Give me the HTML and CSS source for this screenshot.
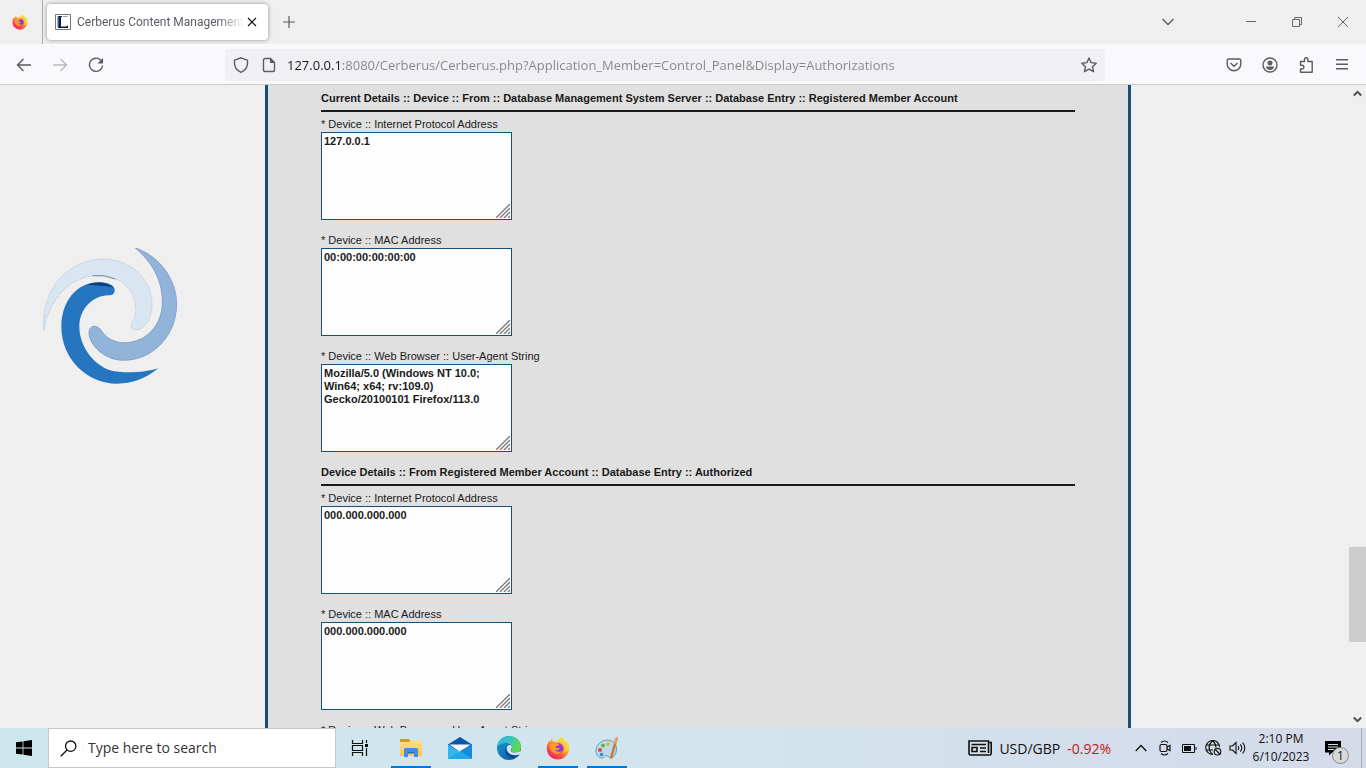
FILE: index.html
```html
<!DOCTYPE html>
<html lang="en">
<head>
<meta charset="utf-8">
<title>Cerberus Content Management</title>
<link rel="stylesheet" href="styles.css">
</head>
<body>
<svg class="defs" aria-hidden="true">
  <defs>
    <linearGradient id="fxBody" x1="0.85" y1="0.1" x2="0.2" y2="0.95">
      <stop offset="0" stop-color="#fff044"/><stop offset="0.35" stop-color="#ffb627"/><stop offset="0.65" stop-color="#ff5a36"/><stop offset="1" stop-color="#f01c72"/>
    </linearGradient>
    <linearGradient id="fxGlobe" x1="0.8" y1="0" x2="0.3" y2="1">
      <stop offset="0" stop-color="#b833e1"/><stop offset="1" stop-color="#5a3fc8"/>
    </linearGradient>
    <linearGradient id="edgeBlue" x1="0" y1="0" x2="1" y2="1">
      <stop offset="0" stop-color="#1b9de2"/><stop offset="1" stop-color="#0c4f96"/>
    </linearGradient>
    <linearGradient id="edgeGreen" x1="0" y1="0" x2="1" y2="0.5">
      <stop offset="0" stop-color="#2bb5e8"/><stop offset="0.5" stop-color="#36c6c0"/><stop offset="1" stop-color="#62d84c"/>
    </linearGradient>
    <linearGradient id="folder" x1="0" y1="0" x2="0" y2="1">
      <stop offset="0" stop-color="#ffe08a"/><stop offset="1" stop-color="#fbc83f"/>
    </linearGradient>
    <symbol id="firefox" viewBox="0 0 24 24">
      <path fill="url(#fxBody)" d="M15.300.500c1 1.200 2 2.400 2.600 4 .8.500 1.400 1.100 1.800 1.700l.5-2c1.900 2 2.900 5.200 2.900 8.300C23.100 18.500 18.200 23.500 12 23.500S.8 18.700.8 12.500c0-3.400 1.200-6 2.700-8l.4 1.800L5.800 2.500c.3 1.200.9 2.300 1.900 3.200 1.500-.6 3.200-.7 4.600-.1.200-2.300 1.200-4.100 3-5.100z"/>
      <circle cx="12.300" cy="12.300" r="5.200" fill="url(#fxGlobe)"/>
      <path fill="#ff9a26" d="M3.600 8.500c2.200-2 4.700-2 6.700-1.200 1.200 0 2.200.4 2.800 1.100-.5 1.300-1.800 1.500-3 1.900-.5.700.1 1.500.9 1.700 1.200.2 2 .4 3.100-.1-.8 2.200-3.200 3-5.200 1.900 1 2 4.800 2.700 7 .9-1.300 3.500-6.500 4.600-9.600 1.400C4.200 14 3.400 11 3.600 8.500z"/>
      <path fill="#ffd43a" d="M15.300.5c-1.200 3.800 5 5.200 4.500 11.500-.1 2-1.100 3.700-2.500 4.800 4.800-1.800 5.500-6.900 3.700-10.200C19.300 4.600 17 3.500 15.300.5z"/>
    </symbol>
  </defs>
</svg>

<header class="tabbar">
  <button class="pinned" aria-label="Firefox View"><svg width="16" height="16"><use href="#firefox"/></svg></button>
  <div class="tab">
    <svg width="16" height="16" viewBox="0 0 16 16"><path fill="#fff" stroke="#777" d="M.5.500h15v15H.5z"/><path fill="#111a38" d="M3 2h4v1H6v9.500h5l2-1V14H3v-1z"/><path fill="#3d5db0" d="M2.500 2H4v11H2.500z"/><path stroke="#99a" d="M8 2.500h4.500"/></svg>
    <span class="tab-title">Cerberus Content Management</span>
    <button class="tab-close" aria-label="Close tab"><svg width="10" height="10" viewBox="0 0 10 10"><path d="M1 1l8 8M9 1L1 9" stroke="#15141a" stroke-width="1.200"/></svg></button>
  </div>
  <button class="new-tab" aria-label="New tab"><svg width="12" height="12" viewBox="0 0 12 12"><path d="M6 0v12M0 6h12" stroke="#5b5b66" stroke-width="1.200"/></svg></button>
  <button class="all-tabs" aria-label="List all tabs"><svg width="14" height="8" viewBox="0 0 14 8" fill="none"><path d="M1.500 1L7 6.500 12.500 1" stroke="#5b5b66" stroke-width="1.500"/></svg></button>
  <div class="window-controls">
    <button aria-label="Minimize"><svg width="10" height="10" viewBox="0 0 10 10"><path d="M0 4.500h10" stroke="#666"/></svg></button>
    <button aria-label="Restore"><svg width="10" height="10" viewBox="0 0 10 10" fill="none" stroke="#666"><path d="M.5 2.500h7v7h-7zM2.500 2.500v-2h7v7h-2"/></svg></button>
    <button aria-label="Close"><svg width="10" height="10" viewBox="0 0 10 10"><path d="M0 0l10 10M10 0L0 10" stroke="#666"/></svg></button>
  </div>
</header>

<nav class="toolbar">
  <button aria-label="Back"><svg width="16" height="16" viewBox="0 0 16 16"><path d="M15 8H2M7.500 2L1.500 8l6 6"/></svg></button>
  <button class="dim" aria-label="Forward"><svg width="16" height="16" viewBox="0 0 16 16"><path d="M1 8h13M8.500 2l6 6-6 6"/></svg></button>
  <button aria-label="Reload"><svg width="16" height="16" viewBox="0 0 16 16"><path d="M12.800 3.200A6.600 6.600 0 1 0 14.600 8.500"/><path d="M15 1v5.500H9.500z" fill="#5b5b66" stroke="none"/></svg></button>
  <div class="urlbar">
    <button aria-label="Tracking protection"><svg width="16" height="16" viewBox="0 0 16 16"><path d="M8 .8l6.500 2.400v3.300c0 4-2.500 7-6.500 8.800C4 13.500 1.500 10.500 1.500 6.500V3.200z"/></svg></button>
    <button aria-label="Site information"><svg width="16" height="16" viewBox="0 0 16 16"><path d="M9.500 1.500H4A1.500 1.500 0 0 0 2.500 3v10A1.500 1.500 0 0 0 4 14.500h8a1.500 1.500 0 0 0 1.500-1.500V5.500z"/><path d="M9 1l5 5H9z" fill="#5b5b66" stroke="none"/></svg></button>
    <input class="url" type="text" aria-label="Address" spellcheck="false" value="127.0.0.1:8080/Cerberus/Cerberus.php?Application_Member=Control_Panel&amp;Display=Authorizations">
    <button aria-label="Bookmark"><svg width="16" height="16" viewBox="0 0 16 16"><path stroke-linejoin="round" d="M8 1l2.100 4.600 5.100.6-3.700 3.500 1 5L8 12.200l-4.500 2.500 1-5L.8 6.200l5.100-.6z"/></svg></button>
  </div>
  <button aria-label="Save to Pocket"><svg width="16" height="16" viewBox="0 0 16 16"><path d="M2.500 2h11a1.300 1.300 0 0 1 1.300 1.300V7a6.800 6.800 0 0 1-13.600 0V3.300A1.300 1.300 0 0 1 2.500 2zM4.500 6L8 9.200 11.500 6"/></svg></button>
  <button aria-label="Account"><svg width="16" height="16" viewBox="0 0 16 16"><circle cx="8" cy="8" r="7"/><circle cx="8" cy="6" r="2.500" fill="#5b5b66" stroke="none"/><path d="M4 9.500h8c0 2.200-1.800 3.500-4 3.500s-4-1.300-4-3.500z" fill="#5b5b66" stroke="none"/></svg></button>
  <button aria-label="Extensions"><svg width="16" height="16" viewBox="0 0 16 16"><path stroke-linejoin="round" d="M2.500 7V4.500h4V2.500a1.700 1.700 0 0 1 3.400 0v2h4.300v10.800H2.500V12H4a1.800 1.800 0 0 0 0-3.800H2.500z"/></svg></button>
  <button aria-label="Menu"><svg width="16" height="16" viewBox="0 0 16 16"><path d="M2 2.700h12M2 7.200h12M2 11.700h12"/></svg></button>
</nav>

<div class="viewport">
  <aside class="side">
    <svg class="logo" viewBox="66 54 408 408" role="img" aria-label="Swirl logo">
      <path fill="#d9e6f1" stroke="#9fb2c5" stroke-width="2" stroke-dasharray="4 4" d="M71 301C62 172 150 87 250 87c85 0 146 63 146 135 0 33-11 58-28 71-10 9-33 9-35-5 0-10 14-23 14-48 0-55-37-103-112-103C150 137 90 205 71 301z"/>
      <path fill="none" stroke="#76879a" stroke-width="3" d="M218 137q36-4 68 10"/>
      <path fill="#93b4da" stroke="#6f8eb8" stroke-width="2" d="M346 54c74 24 124 96 124 168 0 93-70 169-160 169-55 0-103-46-103-83 0-12 8-20 17-19 10 0 16 7 21 14 17 24 40 35 70 35 65-2 112-53 112-123 0-65-32-120-81-161z"/>
      <path fill="#2675c0" d="M415 415c-40 32-80 46-123 46-92 0-168-76-168-171 0-75 46-133 111-133 27 0 49 8 49 23 0 10-6 16-18 16-51 1-88 44-88 94 0 55 37 110 92 131 45 11 105 6 145-6z"/>
      <path fill="#0d3c7d" d="M202 164c25-11 60-8 78 8-20-5-50-6-78-8z"/>
    </svg>
  </aside>

  <main class="panel">
    <section>
      <h2>Current Details :: Device :: From :: Database Management System Server :: Database Entry :: Registered Member Account</h2>
      <div class="field">
        <label for="ip1">* Device :: Internet Protocol Address</label>
        <div class="box"><textarea id="ip1" spellcheck="false">127.0.0.1</textarea><svg class="grip" viewBox="0 0 14 14"><path d="M0 14L14 0M4 14L14 4M8 14l6-6M12 14l2-2"/></svg></div>
      </div>
      <div class="field">
        <label for="mac1">* Device :: MAC Address</label>
        <div class="box"><textarea id="mac1" spellcheck="false">00:00:00:00:00:00</textarea><svg class="grip" viewBox="0 0 14 14"><path d="M0 14L14 0M4 14L14 4M8 14l6-6M12 14l2-2"/></svg></div>
      </div>
      <div class="field">
        <label for="ua1">* Device :: Web Browser :: User-Agent String</label>
        <div class="box"><textarea id="ua1" spellcheck="false">Mozilla/5.0 (Windows NT 10.0; Win64; x64; rv:109.0) Gecko/20100101 Firefox/113.0</textarea><svg class="grip" viewBox="0 0 14 14"><path d="M0 14L14 0M4 14L14 4M8 14l6-6M12 14l2-2"/></svg></div>
      </div>
    </section>
    <section>
      <h2>Device Details :: From Registered Member Account :: Database Entry :: Authorized</h2>
      <div class="field">
        <label for="ip2">* Device :: Internet Protocol Address</label>
        <div class="box"><textarea id="ip2" spellcheck="false">000.000.000.000</textarea><svg class="grip" viewBox="0 0 14 14"><path d="M0 14L14 0M4 14L14 4M8 14l6-6M12 14l2-2"/></svg></div>
      </div>
      <div class="field">
        <label for="mac2">* Device :: MAC Address</label>
        <div class="box"><textarea id="mac2" spellcheck="false">000.000.000.000</textarea><svg class="grip" viewBox="0 0 14 14"><path d="M0 14L14 0M4 14L14 4M8 14l6-6M12 14l2-2"/></svg></div>
      </div>
      <div class="field">
        <label for="ua2">* Device :: Web Browser :: User-Agent String</label>
        <div class="box"><textarea id="ua2" spellcheck="false"></textarea></div>
      </div>
    </section>
  </main>

  <div class="side-right"></div>

  <div class="scrollbar">
    <button aria-label="Scroll up"><svg width="9" height="7" viewBox="0 0 9 7" fill="none"><path d="M.8 5.500L4.500 1.800l3.700 3.700" stroke="#505050" stroke-width="2"/></svg></button>
    <div class="track"><div class="thumb"></div></div>
    <button aria-label="Scroll down"><svg width="9" height="7" viewBox="0 0 9 7" fill="none"><path d="M.8 1.500l3.700 3.700 3.700-3.700" stroke="#505050" stroke-width="2"/></svg></button>
  </div>
</div>

<footer class="taskbar">
  <button class="start" aria-label="Start"><svg width="16" height="16" viewBox="0 0 16 16"><path d="M0 2.300l6.600-.9v6.200H0zM7.400 1.300L16 0v7.600H7.400zM0 8.400h6.600v6.200L0 13.700zM7.400 8.400H16V16l-8.600-1.300z"/></svg></button>
  <label class="search">
    <svg width="17" height="17" viewBox="0 0 17 17" fill="none" stroke="#111" stroke-width="1.300"><circle cx="10.700" cy="6.200" r="5.200"/><path d="M7 10L.8 16.200"/></svg>
    <input type="text" placeholder="Type here to search" aria-label="Type here to search">
  </label>
  <div class="apps">
    <button class="task-view" aria-label="Task view"><svg width="18" height="16" viewBox="0 0 18 16" fill="none" stroke="#111" stroke-width="1.200"><path d="M1.500 0v3.500h10V0M1.500 16v-3.500h10V16M1.500 5.500h10v5h-10zM15.500 0v3M15.500 8v8"/><path d="M14 4h3v3h-3z" fill="#111" stroke="none"/></svg></button>
    <button class="open" aria-label="File Explorer"><svg width="22" height="20" viewBox="0 0 22 20"><path fill="#d89a1c" d="M0 1h9l1.500 2H22v5H0z"/><path fill="url(#folder)" d="M0 4h9l1.500-1.500H22V18H0z"/><path fill="#3b8ee0" d="M4 11.500q0-1.500 1.500-1.500h11q1.500 0 1.500 1.500V19h-4v-4.500H8V19H4z"/><path fill="#1e6bb8" d="M8 14h6v1.500H8z"/></svg></button>
    <button aria-label="Mail"><svg width="24" height="22" viewBox="0 0 24 22"><path fill="#0a58a8" d="M0 7.500L12 0l12 7.500V14H0z"/><path fill="#f4f8fc" d="M1.500 7.500h21L12 15z"/><path fill="#35b5ef" d="M0 7.500L13 16l6 6H0z"/><path fill="#1689da" d="M24 7.500L11 14.500 24 22z"/><path fill="#28a4ea" d="M0 22L12.500 14 24 22z"/></svg></button>
    <button aria-label="Microsoft Edge"><svg width="24" height="24" viewBox="0 0 24 24"><circle cx="12" cy="12" r="12" fill="url(#edgeBlue)"/><path fill="url(#edgeGreen)" d="M.2 10.800C1.200 4 6.500 0 12.300 0 19.500 0 24 5.500 24 10.800c0 3.600-2.700 5.600-6 5.600-2.500 0-4-1-4-2 0-.8.900-1.200.9-3 0-2.500-3-4.400-6.500-4.400-3.300 0-6.400 1.400-8.200 3.800z"/><path fill="#0d4a91" d="M8.800 11.500c-1.800 3.700.5 10 6 10.600 3 .3 5.500-.8 7.800-3.700-2.600 1.300-6 1.300-8.300.3-3.100-1.200-5-3.800-5.500-7.200z"/><path fill="#d3e7ef" d="M14.600 9.700c.8 2.700-.9 3.400-.9 4.700 0 1.100 1.700 2.200 4.500 2.100 2.500 0 4.100-1 5.100-2.300.5 1.700.2 3-.8 4.200-2.500 1-6 1-8.300.1-4-1.500-5.200-4.800-4-8 1-1.700 3-2 4.400-.8z"/></svg></button>
    <button class="open" aria-label="Firefox"><svg width="24" height="24"><use href="#firefox"/></svg></button>
    <button class="open" aria-label="Paint"><svg width="24" height="24" viewBox="0 0 24 24"><path fill="#bedbe9" stroke="#5f9fbe" d="M13 4C6 4 1 9 1 15c0 4 2.500 7 6 7 2 0 2-2 3.500-2.500 2-.6 2.500 2 5 2 4 0 6-4 6-8.500C21.500 8 18 4 13 4z"/><circle cx="5" cy="14" r="2" fill="#d84b3a"/><circle cx="8" cy="9.500" r="1.900" fill="#69ad42"/><circle cx="13" cy="8" r="1.900" fill="#e5b52e"/><circle cx="6.500" cy="18.500" r="1.800" fill="#4a7fd0"/><path d="M20.500 6L16 22.500" stroke="#c47a3a" stroke-width="2.500"/><path fill="#dfa566" d="M18.500 7l1.500-5 3-1.500V4l-2 4z"/></svg></button>
  </div>
  <div class="tray">
    <button class="news"><svg width="24" height="16" viewBox="0 0 24 16" fill="none" stroke="#111" stroke-width="1.600"><path d="M20.500 2.500V1H1v12.500Q1 15 2.500 15h19q1.700 0 1.700-1.500v-11h-2.700V13"/><path d="M3.500 4.500h14.500M12 8h6M12 11.500h6M4 7.500h5v4H4z"/></svg><span>USD/GBP</span><span class="loss">-0.92%</span></button>
    <div class="tray-icons">
      <button aria-label="Show hidden icons"><svg width="12" height="8" viewBox="0 0 12 8" fill="none"><path d="M.7 7L6 1.500 11.300 7" stroke="#111" stroke-width="1.300"/></svg></button>
      <button aria-label="Meet Now"><svg width="12" height="16" viewBox="0 0 12 16" fill="none" stroke="#111" stroke-width="1.200"><rect x="1" y="4.500" width="7" height="7" rx="1.500"/><path d="M8 7l3-1.500v5L8 9M2 2.500Q5.500-.5 9 2.500M2 13.500q3.500 3 7 0"/></svg></button>
      <button aria-label="Battery"><svg width="15" height="9" viewBox="0 0 15 9" fill="none" stroke="#111"><path d="M.5.500h12v8H.5zM14 3v3"/><path d="M2 2h7v5H2z" fill="#111" stroke="none"/></svg></button>
      <button aria-label="Network"><svg width="17" height="16" viewBox="0 0 17 16" fill="none" stroke="#111" stroke-width="1.100"><path d="M14.700 7A7 7 0 1 0 8 14.500M1 5h13M1 10h7M7.500.5C3 5 3 10 7.500 14.500M7.500.5Q11 4 11 7.500"/><circle cx="12.500" cy="11.700" r="3.300"/><path d="M10.300 9.500l4.500 4.500"/></svg></button>
      <button aria-label="Volume"><svg width="17" height="14" viewBox="0 0 17 14" fill="none" stroke="#111" stroke-width="1.100"><path d="M1 5h2.500L7 1.500v11L3.500 9H1zM9 5q1.500 2 0 4M11.300 3.300q3 3.700 0 7.400M13.600 1.500q4.500 5.500 0 11"/></svg></button>
    </div>
    <button class="clock"><span>2:10 PM</span><span>6/10/2023</span></button>
    <button class="notify" aria-label="Notifications"><svg width="16" height="15" viewBox="0 0 16 15"><path d="M0 0h16v11.500H7L4 14.500v-3H0z"/><path d="M3 3.500h10M3 6h10M3 8.500h6" stroke="#d5ddea"/></svg><span class="count">1</span></button>
    <button class="show-desktop" aria-label="Show desktop"></button>
  </div>
</footer>
</body>
</html>
```

FILE: styles.css
```css
* { box-sizing: border-box; }

body {
  margin: 0;
  height: 100vh;
  display: flex;
  flex-direction: column;
  overflow: hidden;
  background: #efefef;
  font-family: "Open Sans", "Noto Sans", sans-serif;
  color: #15141a;
}

button {
  display: flex;
  align-items: center;
  justify-content: center;
  padding: 0;
  border: 0;
  background: none;
  color: inherit;
  font: inherit;
}

input, textarea { border: 0; outline: 0; margin: 0; }
svg { display: block; flex: none; }
.defs { position: absolute; width: 0; height: 0; }

/* Tab strip */
.tabbar { display: flex; height: 44px; flex: none; background: #efefef; }
.pinned { width: 43px; padding-right: 2px; border-right: 1px solid #aeaeae; }
.tab {
  display: flex;
  align-items: center;
  gap: 6px;
  width: 221px;
  margin: 4px;
  padding: 0 8px;
  border-radius: 4px;
  background: #fff;
  box-shadow: 0 0 4px rgba(0, 0, 0, 0.4);
}
.tab-title {
  flex: 1;
  overflow: hidden;
  white-space: nowrap;
  font-family: Roboto, "Open Sans", sans-serif;
  font-size: 12px;
  line-height: 16px;
  color: #5b5b66;
  mask-image: linear-gradient(to right, #000 85%, transparent);
}
.tab-close { width: 16px; height: 16px; margin: 0 0 0 -6px; }
.new-tab { width: 34px; }
.all-tabs { width: 36px; margin-left: auto; }
.window-controls { display: flex; margin-left: 42px; }
.window-controls button { width: 46px; }

/* Navigation toolbar */
.toolbar {
  display: flex;
  align-items: center;
  flex: none;
  height: 41px;
  padding: 1px 6px 0;
  background: #f9f9fb;
  border-bottom: 1px solid #ccc;
}
.toolbar button { width: 36px; height: 32px; }
.toolbar svg { fill: none; stroke: #5b5b66; stroke-width: 1.4; }
.toolbar .dim { opacity: 0.4; }
.toolbar .urlbar {
  display: flex;
  align-items: center;
  flex: 1;
  margin: 0 111px;
  height: 32px;
  padding: 0 2px;
  border-radius: 4px;
  background: #f0f0f4;
}
.urlbar button { width: 28px; }
.url {
  flex: 1;
  min-width: 0;
  padding: 0 0 0 4px;
  font: 13px/20px "Open Sans", "Noto Sans", sans-serif;
  color: transparent;
  background: linear-gradient(to right, #15141a 60px, #84848c 60px);
  background-clip: text;
  -webkit-background-clip: text;
}

/* Page */
.viewport { display: flex; flex: 1; min-height: 0; overflow: hidden; }
.side { flex: none; width: 265px; padding: 163px 0 0 42px; }
.logo { width: 136px; height: 136px; }
.side-right { flex: none; width: 218px; }
.panel {
  flex: 1;
  padding: 5px 53px 0;
  border: solid #174f7b;
  border-width: 0 3px;
  background: #e0e0e0;
  font: 11px/16px "Liberation Sans", Arial, sans-serif;
  color: #1a1a1a;
}
.panel h2 {
  margin: 0 0 4px;
  padding-bottom: 4px;
  border-bottom: 2px solid #1a1a1a;
  font-size: 11px;
  line-height: 16px;
}
.field { margin-bottom: 12px; }
.field label { display: block; }
.box { position: relative; width: 191px; height: 88px; }
.box textarea {
  display: block;
  width: 100%;
  height: 100%;
  padding: 2px;
  border: 1px solid #174f7b;
  resize: none;
  overflow: hidden;
  background: #fdfdfd;
  font: bold 11px/13px "Liberation Sans", Arial, sans-serif;
  color: #1a1a1a;
}
.grip {
  position: absolute;
  right: 2px;
  bottom: 2px;
  width: 14px;
  height: 14px;
  fill: none;
  stroke: #777;
  stroke-width: 1.3;
  pointer-events: none;
}

.scrollbar { display: flex; flex-direction: column; flex: none; width: 17px; }
.scrollbar button { height: 17px; }
.track { flex: 1; display: flex; flex-direction: column; }
.track::before { content: ""; flex: 445; }
.track::after { content: ""; flex: 69; }
.thumb { flex: 95; background: #cdcdcd; }

/* Taskbar */
.taskbar {
  display: flex;
  flex: none;
  height: 40px;
  background: linear-gradient(to right, #cee6ed, #d2e5ee 50%, #d3dfec 75%, #d5dae9);
  color: #111;
}
.start { width: 48px; }
.search {
  display: flex;
  align-items: center;
  gap: 11px;
  width: 288px;
  padding: 0 11px;
  border: 1px solid #c6c6c6;
  background: #fff;
}
.search input {
  flex: 1;
  min-width: 0;
  padding: 0;
  background: none;
  font: 14px/20px "Open Sans", "Noto Sans", sans-serif;
}
.search input::placeholder { color: #333; opacity: 1; }
.apps { display: flex; gap: 9px; padding-left: 4px; }
.apps button { width: 40px; border: solid transparent; border-width: 2px 0; }
.apps .task-view { width: 42px; padding-right: 2px; }
.apps .open { border-bottom-color: #0078d7; }
.tray { display: flex; margin-left: auto; }
.news { gap: 7px; font-size: 14px; margin-right: 18px; }
.loss { color: #c4161c; }
.tray-icons { display: flex; }
.tray-icons button { width: 24px; }
.clock { flex-direction: column; width: 64px; font-size: 12px; line-height: 18px; }
.notify { position: relative; width: 48px; padding-right: 8px; }
.count {
  position: absolute;
  left: 19px;
  top: 19px;
  width: 17px;
  height: 17px;
  border: 1px solid #888;
  border-radius: 50%;
  background: #d8d8dc;
  font-size: 12px;
  line-height: 15px;
}
.show-desktop { width: 5px; border-left: 1px solid #a5aebb; }
```
